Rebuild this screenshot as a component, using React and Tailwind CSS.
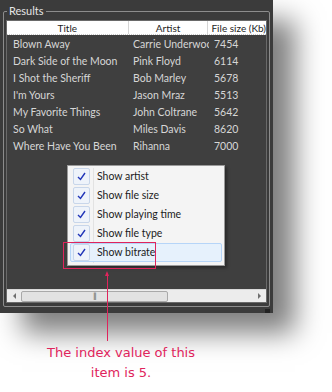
import React from "react";

const songs = [
  { title: "Blown Away", artist: "Carrie Underwood", size: "7454" },
  { title: "Dark Side of the Moon", artist: "Pink Floyd", size: "6114" },
  { title: "I Shot the Sheriff", artist: "Bob Marley", size: "5678" },
  { title: "I'm Yours", artist: "Jason Mraz", size: "5513" },
  { title: "My Favorite Things", artist: "John Coltrane", size: "5642" },
  { title: "So What", artist: "Miles Davis", size: "8620" },
  { title: "Where Have You Been", artist: "Rihanna", size: "7000" }
];

const menuItems = [
  "Show artist",
  "Show file size",
  "Show playing time",
  "Show file type",
  "Show bitrate"
];

function Check() {
  return (
    <span className="w-[17px] h-[17px] rounded-[2px] border border-[#c8d6ea] bg-[#eef3fa] flex items-center justify-center">
      <svg width="9" height="9" viewBox="0 0 9 9">
        <path d="M1 5 L3.5 7.5 L8 1" fill="none" stroke="#2236b8" strokeWidth="1.4" />
      </svg>
    </span>
  );
}

function App() {
  return (
    <div
      className="relative w-[332px] h-[392px] bg-white overflow-hidden"
      style={{ fontFamily: "Lato, 'Noto Sans', sans-serif" }}
    >
      <div className="w-[273px] h-[313px] bg-[#3b3b3b] shadow-[22px_20px_26px_rgba(0,0,0,0.5)] pt-[5px] px-[3px] pb-[6px] flex flex-col">
        <div className="relative flex-1 border border-[#8c8c8c] rounded-[2px] mt-[6px] px-[2px] pt-[8px] pb-[3px] flex flex-col">
          <span className="absolute -top-[8px] left-[3px] bg-[#3b3b3b] px-[2px] text-[11px] leading-[14px] text-[#e6e6e6]">
            Results
          </span>
          <div className="flex-1 border border-[#6a6a6a] bg-[#3f3f3f] flex flex-col">
            <div className="h-[14px] bg-white flex text-[10px] leading-[14px] text-[#1e1e1e] border-b border-dotted border-[#c8c8c8]">
              <div className="w-[122px] text-center border-r border-[#d5d5d5]">Title</div>
              <div className="w-[80px] text-center border-r border-[#d5d5d5]">Artist</div>
              <div className="pl-[3px] whitespace-nowrap">File size (Kb)</div>
            </div>
            <div className="flex-1 flex flex-col pt-[1px] text-[10.5px] text-[#d6d6d6]">
              {songs.map((s) => (
                <div key={s.title} className="h-[17px] flex items-center whitespace-nowrap">
                  <div className="w-[122px] pl-[6px]">{s.title}</div>
                  <div className="w-[80px] pl-[4px] overflow-hidden">{s.artist}</div>
                  <div className="pl-[5px]">{s.size}</div>
                </div>
              ))}
            </div>
            <div className="h-[13px] bg-[#ececec] flex items-center border-t border-[#d8d8d8]">
              <div className="w-[14px] flex justify-center">
                <span className="w-0 h-0 border-y-[3px] border-y-transparent border-r-[3px] border-r-[#707070]" />
              </div>
              <div className="w-[147px] h-[11px] rounded-[2px] border border-[#a9a9a9] bg-[#e2e2e2] flex items-center justify-center">
                <span className="text-[7px] leading-[7px] text-[#555] tracking-[-1px]">|||</span>
              </div>
              <div className="flex-1" />
              <div className="w-[14px] flex justify-center">
                <span className="w-0 h-0 border-y-[3px] border-y-transparent border-l-[3px] border-l-[#707070]" />
              </div>
            </div>
          </div>
        </div>
      </div>
      <div className="absolute right-[62px] top-[309px] w-[5px] h-[4px] bg-[#222]" />

      <div className="absolute left-[67px] top-[165px] w-[158px] h-[101px] bg-[#f4f4f4] border border-[#9a9a9a] shadow-[2px_2px_3px_rgba(0,0,0,0.35)] pt-[1px] px-[2px]">
        <div className="absolute left-[25px] top-[2px] bottom-[2px] w-px bg-[#e2e2e2]" />
        {menuItems.map((m, i) => (
          <div
            key={m}
            className={
              i === 4
                ? "relative h-[19px] flex items-center gap-[7px] pl-[2px] rounded-[2px] border border-[#b6d5f8] bg-[#e6f1fc]"
                : "relative h-[19px] flex items-center gap-[7px] pl-[2px] border border-transparent"
            }
          >
            <Check />
            <span className="text-[10.5px] text-[#1c1c1c]">{m}</span>
          </div>
        ))}
      </div>

      <div className="absolute left-[63px] top-[242px] w-[93px] h-[27px] border border-[#e0245c]" />
      <div className="absolute left-[107px] top-[273px] w-px h-[68px] bg-[#e0245c]" />
      <div className="absolute left-[105px] top-[271px] w-0 h-0 border-x-[2.5px] border-x-transparent border-b-[5px] border-b-[#e0245c]" />
      <div
        className="absolute left-[40px] top-[343px] w-[162px] text-center text-[13px] leading-[20px] text-[#e0245c]"
        style={{ fontFamily: "'DejaVu Sans', sans-serif" }}
      >
        The index value of this
        <br />
        item is 5.
      </div>
    </div>
  );
}

export default App;
